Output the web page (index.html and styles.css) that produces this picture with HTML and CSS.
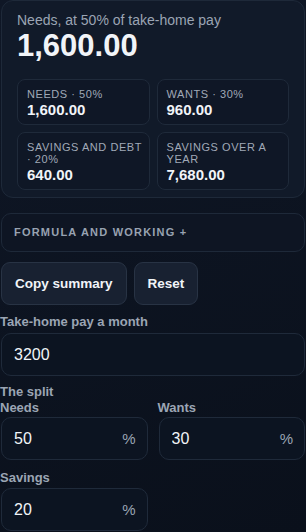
FILE: index.html
```html
<!DOCTYPE html>
<html lang="en">
<head>
  <meta charset="UTF-8">
  <meta name="viewport" content="width=device-width, initial-scale=1.0">
  <title>50/30/20 budget</title>
  <link rel="stylesheet" href="styles.css">
</head>
<body>
  <div class="result">
    <div class="result-label">Needs, at 50% of take-home pay</div>
    <div class="result-value">1,600.00</div>
    <div class="stats">
      <div class="stat">
        <div class="stat-label">Needs · 50%</div>
        <div class="stat-value">1,600.00</div>
      </div>
      <div class="stat">
        <div class="stat-label">Wants · 30%</div>
        <div class="stat-value">960.00</div>
      </div>
      <div class="stat">
        <div class="stat-label">Savings and debt · 20%</div>
        <div class="stat-value">640.00</div>
      </div>
      <div class="stat">
        <div class="stat-label">Savings over a year</div>
        <div class="stat-value">7,680.00</div>
      </div>
    </div>
  </div>

  <details class="working">
    <summary>Formula and working +</summary>
  </details>

  <div class="actions">
    <button>Copy summary</button>
    <button>Reset</button>
  </div>

  <label class="field-label pay-label" for="pay">Take-home pay a month</label>
  <input id="pay" class="field" type="text" value="3200">

  <div class="field-label split-title">The split</div>
  <div class="split">
    <div>
      <label class="field-label" for="needs">Needs</label>
      <div class="pct">
        <input id="needs" type="text" value="50">
        <span>%</span>
      </div>
    </div>
    <div>
      <label class="field-label" for="wants">Wants</label>
      <div class="pct">
        <input id="wants" type="text" value="30">
        <span>%</span>
      </div>
    </div>
    <div class="savings">
      <label class="field-label" for="savings">Savings</label>
      <div class="pct">
        <input id="savings" type="text" value="20">
        <span>%</span>
      </div>
    </div>
  </div>
</body>
</html>
```

FILE: styles.css
```css
html {
  background: linear-gradient(160deg, #0f1726 0%, #0a101b 100%);
  min-height: 100%;
}
body {
  margin: 0;
  padding: 0 1px;
  font-family: "Liberation Sans", Arial, sans-serif;
  color: #f1f4f8;
}
.result {
  background-color: #111a29;
  border: 1px solid #1e2939;
  border-radius: 12px;
  padding: 11px 15px 7px;
}
.result-label {
  font-size: 14px;
  line-height: 16px;
  color: #9ba5b4;
}
.result-value {
  font-size: 31px;
  line-height: 36px;
  font-weight: bold;
  margin-bottom: 15px;
}
.stats {
  display: grid;
  grid-template-columns: minmax(0, 1fr) minmax(0, 1fr);
  gap: 7px;
}
.stat {
  border: 1px solid #1f2a3a;
  border-radius: 8px;
  padding: 8px 6px 5px 9px;
  background-color: #0f1726;
}
.stat-label {
  font-size: 11px;
  line-height: 12px;
  text-transform: uppercase;
  letter-spacing: 0.05em;
  color: #a0a9b7;
}
.stat-value {
  font-size: 15px;
  line-height: 18px;
  font-weight: bold;
  margin-top: 1px;
}
.working {
  margin-top: 15px;
  border: 1px solid #1e2939;
  border-radius: 10px;
  background-color: #0e1523;
}
.working summary {
  list-style: none;
  padding: 11px 12px;
  font-size: 11px;
  line-height: 15px;
  font-weight: bold;
  text-transform: uppercase;
  letter-spacing: 0.11em;
  color: #98a2b1;
  cursor: pointer;
}
.working summary::-webkit-details-marker {
  display: none;
}
.actions {
  display: flex;
  gap: 7px;
  margin-top: 10px;
}
.actions button {
  padding: 12px 13px;
  font-family: inherit;
  font-size: 13.5px;
  line-height: 17px;
  font-weight: bold;
  color: #f1f4f8;
  background-color: #182131;
  border: 1px solid #283344;
  border-radius: 9px;
  cursor: pointer;
}
.field-label {
  display: block;
  font-size: 13px;
  line-height: 16px;
  font-weight: bold;
  color: #9ba5b4;
  margin: 0 0 1px -1px;
}
.pay-label {
  margin-top: 9px;
  margin-bottom: 3px;
}
.split-title {
  margin-top: 8px;
  margin-bottom: 0;
}
.field,
.pct {
  box-sizing: border-box;
  width: 100%;
  height: 43px;
  border: 1px solid #1f2a3a;
  border-radius: 10px;
  background-color: #0c1421;
}
.field {
  display: block;
  padding: 0 12px;
  font-family: inherit;
  font-size: 16px;
  color: #f1f4f8;
}
.split {
  display: grid;
  grid-template-columns: minmax(0, 1fr) minmax(0, 1fr);
  column-gap: 11px;
}
.savings .field-label {
  margin-top: 10px;
  margin-bottom: 2px;
}
.pct {
  display: flex;
  align-items: center;
  padding: 0 11px 0 12px;
}
.pct input {
  flex: 1;
  min-width: 0;
  border: none;
  background: none;
  font-family: inherit;
  font-size: 16px;
  color: #f1f4f8;
  padding: 0;
  outline: none;
}
.pct span {
  font-size: 15px;
  color: #9ba5b4;
}
```
